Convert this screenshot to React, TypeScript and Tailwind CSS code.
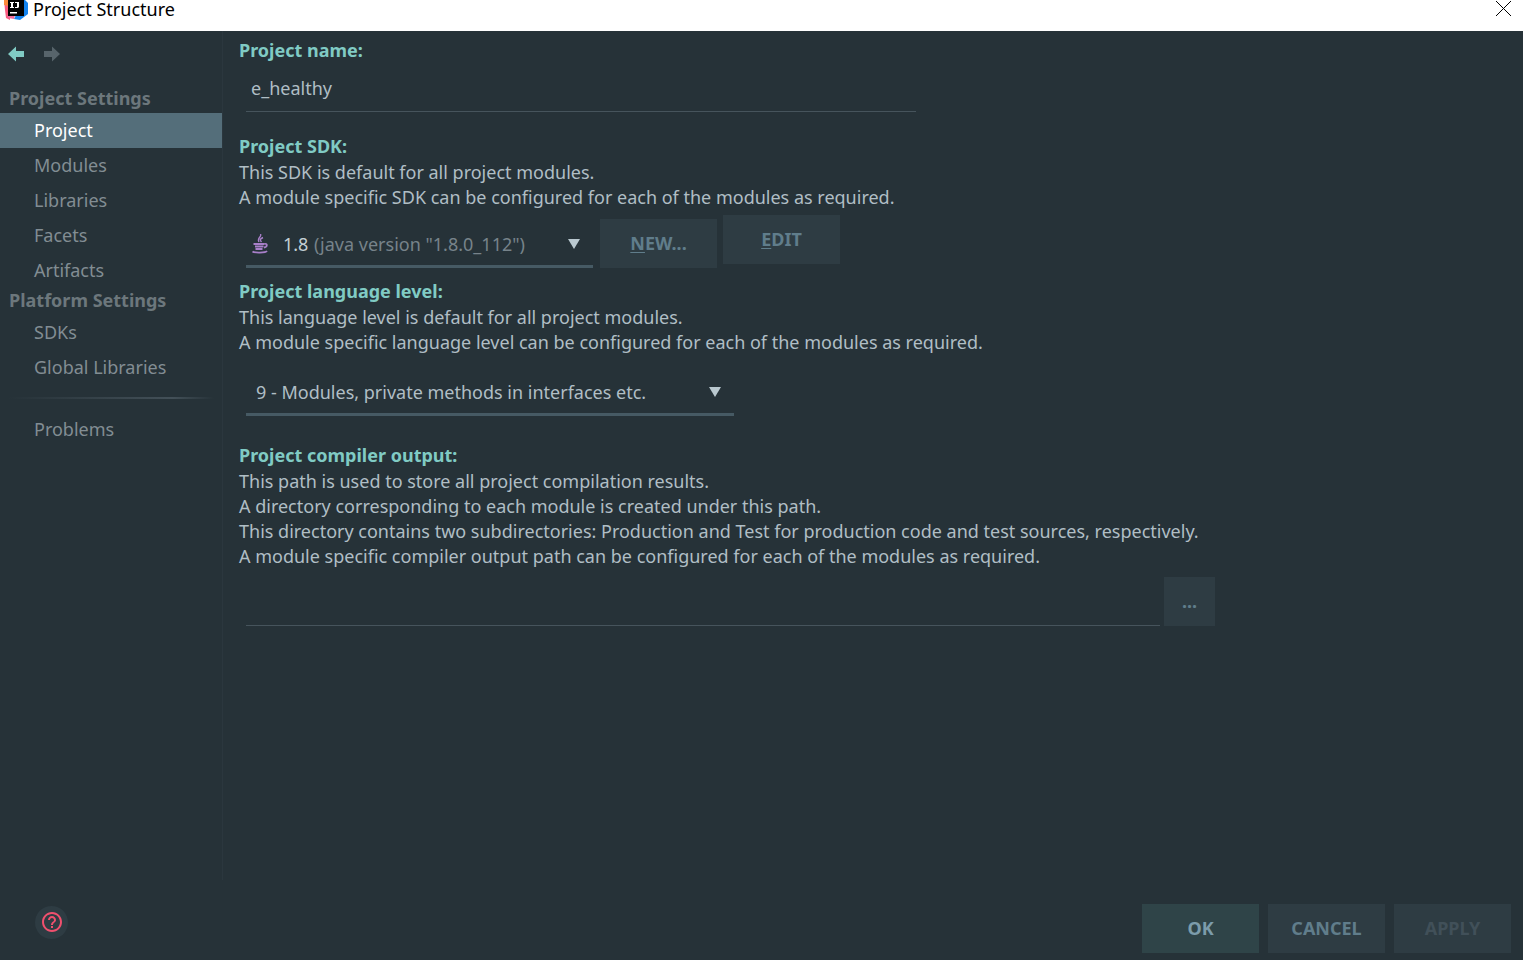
import { useState } from "react";

function LogoIcon() {
  return (
    <svg width="28" height="20" viewBox="0 0 28 20" aria-hidden="true">
      <path d="M4 0h6v20L6 18 5 10z" fill="#fc5b80" />
      <path d="M4 0h5v6L4 5z" fill="#fd8a3c" />
      <path d="M23 0h2l3 3v11l-8 6-6-1z" fill="#1483ee" />
      <path d="M7 15h8l-1 4-6-1z" fill="#f06a9a" />
      <rect x="8" y="0" width="16" height="16" fill="#000" />
      <path d="M10 2h4v1h-1v4h1v1h-4V7h1V3h-1zM15 2h4v5l-1 1h-3V7h2V3h-2z" fill="#fff" />
      <rect x="10" y="12" width="7" height="1.500" fill="#fff" />
    </svg>
  );
}

function JavaIcon() {
  return (
    <svg width="18" height="20" viewBox="0 0 18 20" fill="none" stroke="#a87fc9" aria-hidden="true">
      <path d="M9.500 0c1.500 3-4 4-1.500 8M12 3.500c-3 1.500-3.500 2-1.500 4.500" strokeWidth="1.400" />
      <path d="M2.500 10h10.500M4 12.500h8.500M13 10c4-1 3.500 3 0 3.500" strokeWidth="1.800" />
      <path d="M4.500 15h7M1.500 17.500c2 1.500 13 1.500 14.500-.5" strokeWidth="1.800" />
    </svg>
  );
}

function Arrow({ flip = false }: { flip?: boolean }) {
  return (
    <svg width="16" height="16" viewBox="0 0 16 16" className={flip ? "rotate-180" : ""} fill="currentColor" aria-hidden="true">
      <path d="M0 8 8 .5V5h8v6H8v4.500z" />
    </svg>
  );
}

function Caret() {
  return (
    <svg width="12" height="10" viewBox="0 0 12 10" className="pointer-events-none col-start-1 row-start-1 mr-[13px] self-center justify-self-end" fill="#b9c8cf" aria-hidden="true">
      <path d="M0 0h12L6 10z" />
    </svg>
  );
}

const projectItems = ["Project", "Modules", "Libraries", "Facets", "Artifacts"];
const platformItems = ["SDKs", "Global Libraries"];

type NavProps = { label: string; current: string; onSelect: (label: string) => void };

function NavItem({ label, current, onSelect }: NavProps) {
  const tone = label === current ? "bg-[#546e7a] text-white" : "text-[#828d93]";
  return (
    <button type="button" onClick={() => onSelect(label)} className={`block h-[35px] w-full pb-px pl-[34px] text-left ${tone}`}>
      {label}
    </button>
  );
}

const heading = "block h-[26px] font-bold text-[#80cbc4]";
const navHeading = "h-[27px] pl-[9px] font-bold text-[#6c777c]";
const button = "h-[49px] w-[117px] shrink-0 font-bold";
const select = "col-start-1 row-start-1 h-full w-full appearance-none bg-transparent outline-none";
const combo = "grid h-12 grid-cols-1 grid-rows-1 border-b-[3px] border-[#465a64] pt-[3px]";

export default function App() {
  const [current, setCurrent] = useState("Project");
  const [name, setName] = useState("e_healthy");
  const [output, setOutput] = useState("");

  return (
    <div className="flex min-h-screen flex-col bg-[#263238] font-['Noto_Sans','Open_Sans',sans-serif] text-[18px] leading-[25px] text-[#b0bec5]">
      <header className="flex h-[31px] items-start justify-between bg-white text-black">
        <div className="flex items-start gap-[5px]">
          <LogoIcon />
          <h1 className="leading-[18px]">Project Structure</h1>
        </div>
        <button type="button" aria-label="Close" className="pr-[11px]">
          <svg width="17" height="17" viewBox="0 0 17 17" stroke="#000" strokeWidth="1" aria-hidden="true">
            <path d="M1 1l15 15M16 1L1 16" />
          </svg>
        </button>
      </header>

      <div className="flex grow">
        <nav className="w-[223px] shrink-0 border-r border-[#2b373e]">
          <div className="flex gap-5 px-2 pb-6 pt-[15px]">
            <button type="button" aria-label="Back" className="text-[#80cbc4]"><Arrow /></button>
            <button type="button" aria-label="Forward" className="text-[#57646b]"><Arrow flip /></button>
          </div>
          <h2 className={navHeading}>Project Settings</h2>
          {projectItems.map((item) => (
            <NavItem key={item} label={item} current={current} onSelect={setCurrent} />
          ))}
          <h2 className={navHeading}>Platform Settings</h2>
          {platformItems.map((item) => (
            <NavItem key={item} label={item} current={current} onSelect={setCurrent} />
          ))}
          <div className="mx-2 mb-[13px] mt-3 h-[2px] bg-linear-to-r from-transparent via-[#435058] to-transparent via-20% via-80%" />
          <NavItem label="Problems" current={current} onSelect={setCurrent} />
        </nav>

        <main className="min-w-0 grow px-4 pt-[7px]">
          <label htmlFor="name" className={heading}>Project name:</label>
          <div className="pl-[7px]">
            <input id="name" value={name} onChange={(e) => setName(e.target.value)} className="block h-12 w-full max-w-[670px] border-b border-[#46545c] bg-transparent pl-[5px] outline-none" />
          </div>

          <label htmlFor="sdk" className={`mt-[22px] ${heading}`}>Project SDK:</label>
          <p>This SDK is default for all project modules.</p>
          <p>A module specific SDK can be configured for each of the modules as required.</p>
          <div className="mt-[5px] flex h-[53px] pl-[7px]">
            <div className={`${combo} mr-[7px] w-[347px] self-end`}>
              <select id="sdk" className={`${select} pl-[37px] text-[#c3cfd4]`}>
                <option>1.8</option>
              </select>
              <span className="pointer-events-none col-start-1 row-start-1 flex items-center pl-[5px]"><JavaIcon /></span>
              <span className="pointer-events-none col-start-1 row-start-1 self-center pl-[68px] text-[#77838a]">(java version "1.8.0_112")</span>
              <Caret />
            </div>
            <button type="button" className={`${button} mr-[6px] self-end bg-[#2e3c43] text-[#607d8b]`}><span className="underline underline-offset-2">N</span>EW...</button>
            <button type="button" className={`${button} self-start bg-[#2e3c43] text-[#607d8b]`}><span className="underline underline-offset-2">E</span>DIT</button>
          </div>

          <label htmlFor="level" className={`mt-[11px] ${heading}`}>Project language level:</label>
          <p>This language level is default for all project modules.</p>
          <p>A module specific language level can be configured for each of the modules as required.</p>
          <div className="mt-[13px] pl-[7px]">
            <div className={`${combo} w-[488px]`}>
              <select id="level" className={`${select} pl-[10px]`}>
                <option>9 - Modules, private methods in interfaces etc.</option>
              </select>
              <Caret />
            </div>
          </div>

          <label htmlFor="output" className={`mt-[27px] ${heading}`}>Project compiler output:</label>
          <p>This path is used to store all project compilation results.</p>
          <p>A directory corresponding to each module is created under this path.</p>
          <p>This directory contains two subdirectories: Production and Test for production code and test sources, respectively.</p>
          <p>A module specific compiler output path can be configured for each of the modules as required.</p>
          <div className="mt-2 flex max-w-[976px] gap-1 pl-[7px]">
            <input id="output" value={output} onChange={(e) => setOutput(e.target.value)} className="min-w-0 grow border-b border-[#46545c] bg-transparent pl-[5px] outline-none" />
            <button type="button" aria-label="Browse" className="h-[49px] w-[51px] bg-[#2e3c43] font-bold text-[#607d8b]">...</button>
          </div>
        </main>
      </div>

      <footer className="flex h-20 items-center justify-between pl-[35px] pr-3 pt-1">
        <button type="button" aria-label="Help" className="grid h-[33px] w-[33px] place-items-center rounded-full bg-[#2e3c43]">
          <svg width="24" height="24" viewBox="0 0 24 24" fill="#f0506e" aria-hidden="true">
            <path d="M11 18h2v-2h-2v2zm1-16C6.480 2 2 6.480 2 12s4.480 10 10 10 10-4.480 10-10S17.520 2 12 2zm0 18c-4.410 0-8-3.590-8-8s3.590-8 8-8 8 3.590 8 8-3.590 8-8 8zm0-14c-2.210 0-4 1.790-4 4h2c0-1.100.9-2 2-2s2 .9 2 2c0 2-3 1.750-3 5h2c0-2.250 3-2.500 3-5 0-2.210-1.790-4-4-4z" />
          </svg>
        </button>
        <div className="flex gap-[9px] pt-[13px]">
          <button type="button" className={`${button} bg-[#2f4448] text-[#7c9cab]`}>OK</button>
          <button type="button" className={`${button} bg-[#2e3c43] text-[#607d8b]`}>CANCEL</button>
          <button type="button" disabled className={`${button} bg-[#2e3c43] text-[#415059]`}>APPLY</button>
        </div>
      </footer>
    </div>
  );
}
